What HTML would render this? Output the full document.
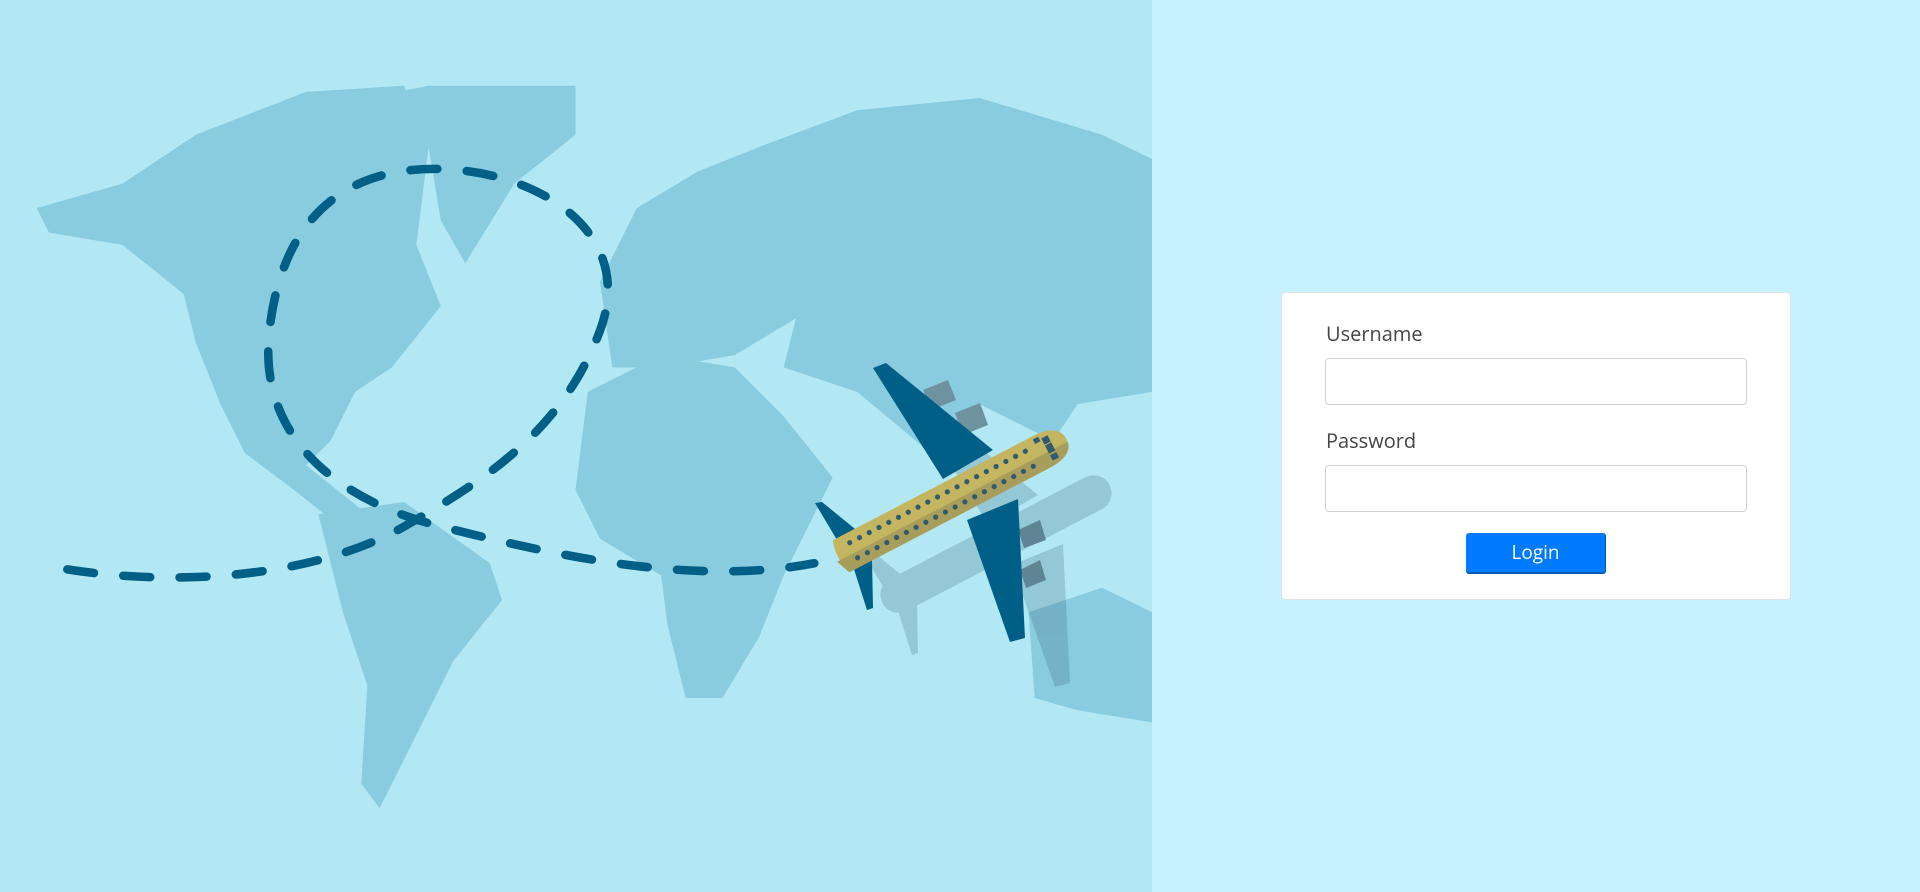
<!DOCTYPE html>
<html><head><meta charset="utf-8"><style>
body{margin:0;width:1920px;height:892px;overflow:hidden;background:#c7f1fc;font-family:"Open Sans","Liberation Sans",sans-serif;position:relative}
#left{position:absolute;left:0;top:0;width:1152px;height:892px;background:#b2e8f4;overflow:hidden}
.card{position:absolute;left:1281px;top:292px;width:510px;height:308px;background:#fff;border:1px solid #dfe3e6;border-radius:4px;box-sizing:border-box}
label{position:absolute;left:44px;font-size:20px;color:#444;line-height:24px}
.inp{position:absolute;left:43px;width:422px;height:47px;border:1px solid #ccd1d6;border-radius:4px;box-sizing:border-box}
.btn{position:absolute;left:184px;top:240px;width:140px;height:41px;background:#007bff;border-radius:3px;border-bottom:2px solid #0058b8;border-right:1px solid #0058b8;box-sizing:border-box;color:#fff;font-size:19px;text-align:center;line-height:38px}
</style></head><body>
<div id="left">
<svg width="1152" height="892" viewBox="0 0 1152 892">
<g transform="scale(1.2245)" fill="#89cbdf">
<polygon points="30,170 100,150 160,110 250,75 330,70 350,120 340,200 360,250 320,300 290,320 270,360 250,380 300,420 290,440 240,400 200,370 180,330 160,280 150,240 100,200 40,190"/>
<polygon points="300,80 350,70 470,70 470,110 420,150 380,215 360,180 350,120"/>
<polygon points="260,420 330,410 400,460 410,490 370,540 340,600 310,660 295,640 300,560 280,500 270,460"/>
<polygon points="490,230 520,170 570,140 620,120 700,110 730,140 700,200 650,260 600,290 540,300 500,300"/>
<polygon points="620,120 700,90 800,80 900,110 941,130 941,320 880,330 860,360 800,330 760,370 700,320 640,300 650,260 700,200"/>
<polygon points="480,320 540,290 600,300 640,340 680,390 660,430 640,470 620,520 590,570 560,570 545,510 540,470 490,440 470,400"/>
<polygon points="840,500 900,480 941,500 941,590 880,580 845,570"/>
<path d="M55,465 C150,480 260,470 330,430 S460,350 490,270 S440,140 360,138 S230,180 220,270 S280,410 360,430 S560,480 665,460" fill="none" stroke="#005f87" stroke-width="7" stroke-dasharray="22 24" stroke-linecap="round"/>
</g>
<g opacity="0.22" fill="#2d5a70" transform="translate(45,45)">
<polygon points="873,368 886,363 993,450 943,479"/>
<polygon points="967,520 1018,499 1025,638 1010,642"/>
<polygon points="815,503 822,502 860,533 840,545"/>
<polygon points="852,563 872,560 873,608 867,610"/>
<g transform="translate(951,499) rotate(-27.5)"><rect x="-128" y="-18" width="256" height="36" rx="18"/></g>
</g>
<polygon points="923,390 948,380 956,400 931,410" fill="#6f929f"/>
<polygon points="955,413 980,403 988,425 963,435" fill="#6f929f"/>
<polygon points="1018,530 1040,520 1046,540 1024,548" fill="#5f8494"/>
<polygon points="1020,570 1040,560 1046,580 1026,588" fill="#5f8494"/>
<polygon points="873,368 886,363 993,450 943,479" fill="#005f87"/>
<polygon points="967,520 1018,499 1025,638 1010,642" fill="#005f87"/>
<polygon points="815,503 822,502 860,533 840,545" fill="#005f87"/>
<polygon points="852,563 872,560 873,608 867,610" fill="#005f87"/>
<g transform="translate(951,499) rotate(-27.5)">
<path d="M-124,-18 L100,-18 Q130,-18 130,0 Q130,18 100,18 L-124,18 Q-130,0 -124,-18Z" fill="#c4b560"/>
<path d="M-130,3 L130,3 Q128,18 100,18 L-124,18Z" fill="#a89d5a"/>
<g fill="#2e5b6e">
<circle cx="-110" cy="-8" r="2.6"/><circle cx="-99" cy="-8" r="2.6"/><circle cx="-88" cy="-8" r="2.6"/><circle cx="-77" cy="-8" r="2.6"/><circle cx="-66" cy="-8" r="2.6"/><circle cx="-55" cy="-8" r="2.6"/><circle cx="-44" cy="-8" r="2.6"/><circle cx="-33" cy="-8" r="2.6"/><circle cx="-22" cy="-8" r="2.6"/><circle cx="-11" cy="-8" r="2.6"/><circle cx="0" cy="-8" r="2.6"/><circle cx="11" cy="-8" r="2.6"/><circle cx="22" cy="-8" r="2.6"/><circle cx="33" cy="-8" r="2.6"/><circle cx="44" cy="-8" r="2.6"/><circle cx="55" cy="-8" r="2.6"/><circle cx="66" cy="-8" r="2.6"/><circle cx="77" cy="-8" r="2.6"/><circle cx="88" cy="-8" r="2.6"/>
<circle cx="-110" cy="9" r="2.6"/><circle cx="-99" cy="9" r="2.6"/><circle cx="-88" cy="9" r="2.6"/><circle cx="-77" cy="9" r="2.6"/><circle cx="-66" cy="9" r="2.6"/><circle cx="-55" cy="9" r="2.6"/><circle cx="-44" cy="9" r="2.6"/><circle cx="-33" cy="9" r="2.6"/><circle cx="-22" cy="9" r="2.6"/><circle cx="-11" cy="9" r="2.6"/><circle cx="0" cy="9" r="2.6"/><circle cx="11" cy="9" r="2.6"/><circle cx="22" cy="9" r="2.6"/><circle cx="33" cy="9" r="2.6"/><circle cx="44" cy="9" r="2.6"/><circle cx="55" cy="9" r="2.6"/><circle cx="66" cy="9" r="2.6"/><circle cx="77" cy="9" r="2.6"/><circle cx="88" cy="9" r="2.6"/>
<rect x="108" y="-12" width="7" height="7"/><rect x="108" y="-4" width="7" height="9"/><rect x="108" y="7" width="7" height="6"/><rect x="100" y="-15" width="6" height="5"/>
</g>
</g>
</svg>
</div>
<div class="card">
<label style="top:29px">Username</label>
<div class="inp" style="top:65px"></div>
<label style="top:136px">Password</label>
<div class="inp" style="top:172px"></div>
<div class="btn">Login</div>
</div>
</body></html>
